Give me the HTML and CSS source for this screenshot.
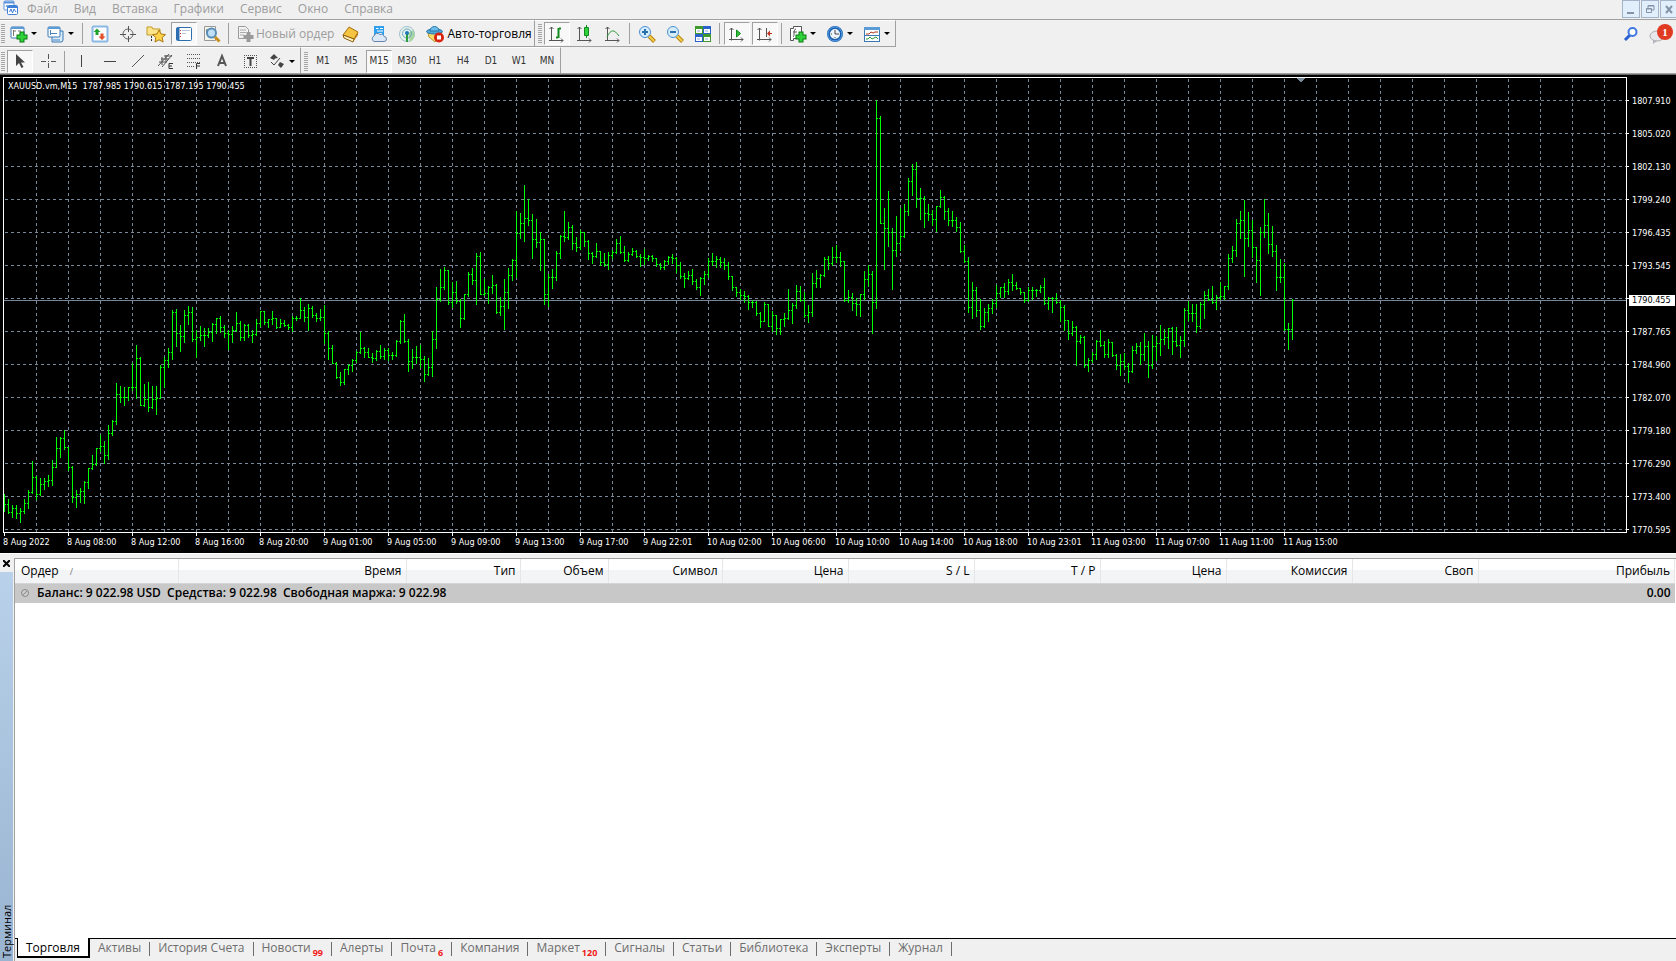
FILE: index.html
```html
<!DOCTYPE html>
<html lang="ru">
<head>
<meta charset="utf-8">
<title>XAUUSD.vm,M15</title>
<link rel="stylesheet" href="styles.css">
</head>
<body>
<header class="menubar">
  <svg class="app-icon" width="16" height="16" viewBox="0 0 16 16"><rect x="1" y="1" width="10" height="9" rx="1" fill="#fff" stroke="#5b93dd"/><path d="M1 2.500h10" stroke="#5b93dd" stroke-width="2"/><path d="M3 7l1-2 1 3 1-2" stroke="#5b93dd" fill="none"/><rect x="4.500" y="5.500" width="10" height="9" rx="1" fill="#fff" stroke="#3f7fd8"/><path d="M5 7h9" stroke="#3f7fd8" stroke-width="2"/><path d="M6.500 12l1.500-3 1.500 4 1.500-4 2 3" stroke="#3f7fd8" fill="none"/></svg>
  <nav class="menus">
    <button>Файл</button><button>Вид</button><button>Вставка</button><button>Графики</button><button>Сервис</button><button>Окно</button><button>Справка</button>
  </nav>
  <div class="win-buttons">
    <button aria-label="Свернуть"><svg width="16" height="16" viewBox="0 0 16 16"><path d="M4 12h7" stroke="#8494a8" stroke-width="2"/></svg></button>
    <button aria-label="Восстановить"><svg width="16" height="16" viewBox="0 0 16 16"><path d="M6 7V4.500h6V9h-2M6 5h6" stroke="#8494a8" fill="none"/><path d="M4.500 7.500h5v4h-5zM4 8h6" stroke="#8494a8" fill="none"/></svg></button>
    <button aria-label="Закрыть"><svg width="16" height="16" viewBox="0 0 16 16"><path d="M5 5l6 7M11 5l-6 7" stroke="#8494a8" stroke-width="2"/></svg></button>
  </div>
</header>

<div class="toolrow">
  <div class="toolbar">
    <span class="grip"></span>
    <button class="drop" aria-label="Новый график"><svg width="18" height="18" viewBox="0 0 18 18"><rect x="1" y="2" width="13" height="11" rx="1" fill="#fff" stroke="#3b78b4"/><path d="M1 3h13" stroke="#5b9bd5" stroke-width="2"/><path d="M3.500 5v6M3 6h3M8 6h3" stroke="#777"/><path d="M12 6.500v11M6.500 12h11" stroke="#087a10" stroke-width="5"/><path d="M12 7.500v9M7.500 12h9" stroke="#2fd23a" stroke-width="3"/></svg><i class="arrow"></i></button>
    <button class="drop" aria-label="Профили"><svg width="18" height="18" viewBox="0 0 18 18"><path d="M5 6h11v9a2 2 0 0 1-2 2H5z" fill="#d9ebfa" stroke="#3b78b4"/><rect x="1" y="2" width="12" height="10" rx="1" fill="#fff" stroke="#3b78b4"/><path d="M1 3h12" stroke="#5b9bd5" stroke-width="2"/><path d="M3.500 5v5M3 8.500h7M6 15h7" stroke="#4a86bd"/></svg><i class="arrow"></i></button>
    <span class="sep"></span>
    <button aria-label="Обзор рынка"><svg width="18" height="18" viewBox="0 0 18 18"><rect x="1.500" y="1.500" width="15" height="15" rx="1" fill="#fff" stroke="#8ab9e6" stroke-width="2"/><path d="M6 3.500l3.500 3.500H7.500v3h-3V7h-2z" fill="#20a12c"/><path d="M11 15l-3.500-3.500h2v-3h3v3h2z" fill="#e0502a"/></svg></button>
    <button aria-label="Перекрестие"><svg width="18" height="18" viewBox="0 0 18 18"><circle cx="9" cy="9" r="5" fill="none" stroke="#666"/><path d="M9.500 1v6M9.500 11v6M1 9.500h6M11 9.500h6" stroke="#555"/></svg></button>
    <button aria-label="Навигатор"><svg width="20" height="18" viewBox="0 0 20 18"><path d="M1 2h5l1 2h7v6H1z" fill="#fbe489" stroke="#c39a26"/><path d="M5.500 11v6" stroke="#333" stroke-dasharray="2 1"/><path d="M13 5l2 4 4.500.6-3.300 3 .9 4.400-4.100-2.200-4 2.200.8-4.400-3.200-3 4.400-.6z" fill="#ffd24a" stroke="#a97a12"/></svg></button>
    <button class="on" aria-label="Список"><svg width="18" height="18" viewBox="0 0 18 18"><rect x="1.500" y="2.500" width="15" height="13" rx="1" fill="#fff" stroke="#2d6eb0"/><path d="M3 3v12" stroke="#2d6eb0" stroke-width="3"/><path d="M7 5.500h8M7 8.500h4" stroke="#b5c7da"/><path d="M5.500 5v1M5.500 8v1M5.500 11v1" stroke="#c33"/></svg></button>
    <button aria-label="Тестер"><svg width="18" height="18" viewBox="0 0 18 18"><path d="M1.500 1.500h11v14h-11z" fill="#f4f4ea" stroke="#999"/><path d="M4 4v5M3 6h2M8 3v4" stroke="#555"/><circle cx="8.500" cy="8" r="4.500" fill="#bfe0f7" stroke="#5b8fb8" stroke-width="2"/><path d="M12 12l4.500 4.500" stroke="#c98f1e" stroke-width="3"/></svg></button>
    <span class="sep"></span>
    <button class="wide muted"><svg width="17" height="18" viewBox="0 0 17 18"><path d="M1.500 1.500h7l3 3v9h-10z" fill="#f2f2f2" stroke="#9a9a9a"/><path d="M3 5h6M3 7.500h6M3 10h4" stroke="#aaa"/><path d="M11.500 7v10M6.500 12h10" stroke="#999" stroke-width="4"/></svg>Новый ордер</button>
    <button aria-label="MetaEditor"><svg width="18" height="18" viewBox="0 0 18 18"><path d="M1 10l6-8 9 5-4 7z" fill="#f5c542" stroke="#a4700f"/><path d="M1 10l1 3 9 4 1-3z" fill="#fff3c0" stroke="#8a5c0b"/><path d="M12 14l4-7v3l-5 7z" fill="#b87c12"/></svg></button>
    <button aria-label="Облако"><svg width="18" height="18" viewBox="0 0 18 18"><path d="M4 1h10v9H4z" fill="#2fa0ef"/><path d="M6 3.500h2.500M10 3.500h3M7 6h6M6 8.500h6" stroke="#fff"/><path d="M4 16.500a3 3 0 0 1 0-5.500 3.500 3.500 0 0 1 6-1.500 3 3 0 0 1 4 2 2.500 2.500 0 0 1 0 5z" fill="#dde8f6" stroke="#6484ae"/></svg></button>
    <button aria-label="Сигналы"><svg width="18" height="18" viewBox="0 0 18 18"><circle cx="9" cy="9" r="7.500" fill="#e6f2ee" stroke="#9fc0cc"/><path d="M10 8l2 9a8 8 0 0 0 3-12z" fill="#a5d6a0"/><circle cx="9" cy="8.500" r="4.500" fill="none" stroke="#6aa3c0"/><path d="M9 9v8" stroke="#2d9d3c" stroke-width="2"/><circle cx="9" cy="8" r="2" fill="#1f78b5"/></svg></button>
    <button class="wide"><svg width="19" height="18" viewBox="0 0 19 18"><path d="M2 8l1 4 6 5 5-4 2-6z" fill="#f7dc6a" stroke="#b8942a"/><ellipse cx="8.500" cy="6.500" rx="8" ry="2.500" fill="#4fa6d8" stroke="#2a78a8"/><path d="M4 6c0-6 9-6 9 0z" fill="#6cbcec" stroke="#2a78a8"/><circle cx="13" cy="12.500" r="5" fill="#d9230f"/><path d="M11 10.500h4v4h-4z" fill="#fff"/></svg>Авто-торговля</button>
  </div>
  <div class="toolbar">
    <span class="grip"></span>
    <button class="on" aria-label="Бары"><svg width="18" height="18" viewBox="0 0 18 18"><path d="M3.500 2v13.500M1 15.500h14M1.500 4l2-2 2 2M13 13.500l2 2-2 2" stroke="#555" fill="none"/><path d="M10.500 3v10M8 12.500h2M11 3.500h2" stroke="#138a1d" stroke-width="2"/></svg></button>
    <button aria-label="Свечи"><svg width="18" height="18" viewBox="0 0 18 18"><path d="M3.500 2v13.500M1 15.500h14M1.500 4l2-2 2 2M13 13.500l2 2-2 2" stroke="#555" fill="none"/><path d="M10.500 0v13" stroke="#138a1d"/><path d="M8.500 2.500h4v8h-4z" fill="#2fd03a" stroke="#138a1d"/></svg></button>
    <button aria-label="Линия"><svg width="18" height="18" viewBox="0 0 18 18"><path d="M3.500 2v13.500M1 15.500h14M1.500 4l2-2 2 2M13 13.500l2 2-2 2" stroke="#555" fill="none"/><path d="M3 12c4-8 7-8 12-1" stroke="#2f9a37" fill="none"/></svg></button>
    <span class="sep"></span>
    <button aria-label="Увеличить"><svg width="18" height="18" viewBox="0 0 18 18"><path d="M11 11l5.500 5.500" stroke="#b98410" stroke-width="4"/><path d="M11 11l5 5" stroke="#f4cf51" stroke-width="2"/><circle cx="7" cy="7" r="5.500" fill="#d5ecfc" stroke="#4a90cf"/><path d="M4 7h6M7 4v6" stroke="#2a6fae" stroke-width="2"/></svg></button>
    <button aria-label="Уменьшить"><svg width="18" height="18" viewBox="0 0 18 18"><path d="M11 11l5.500 5.500" stroke="#b98410" stroke-width="4"/><path d="M11 11l5 5" stroke="#f4cf51" stroke-width="2"/><circle cx="7" cy="7" r="5.500" fill="#d5ecfc" stroke="#4a90cf"/><path d="M4 7h6" stroke="#2a6fae" stroke-width="2"/></svg></button>
    <button aria-label="Плитка"><svg width="18" height="18" viewBox="0 0 18 18"><path d="M1 1h8v8H1zM9 9h8v8H9z" fill="#3f9a2c"/><path d="M9 1h8v8H9zM1 9h8v8H1z" fill="#2a62c9"/><path d="M2 4h6v4H2zM10 4h6v4h-6zM2 12h6v4H2zM10 12h6v4h-6z" fill="#fff"/><path d="M3 6h3M11 6h3M3 14h3M11 14h3" stroke="#8fb0dd"/></svg></button>
    <span class="sep"></span>
    <button class="on" aria-label="Автопрокрутка"><svg width="18" height="18" viewBox="0 0 18 18"><path d="M3.500 3v12.500M1 14.500h14M1.500 5l2-2 2 2M13 12.500l2 2-2 2" stroke="#555" fill="none"/><path d="M8.500 5v7l4-3.500z" fill="#2fc03a" stroke="#138a1d"/></svg></button>
    <button class="on" aria-label="Сдвиг графика"><svg width="18" height="18" viewBox="0 0 18 18"><path d="M3.500 3v12.500M1 14.500h14M1.500 5l2-2 2 2M13 12.500l2 2-2 2M10.500 3v9" stroke="#555" fill="none"/><path d="M16 8.500h-3" stroke="#c0341d"/><path d="M11 8.500l3-3v6z" fill="#c0341d"/></svg></button>
    <span class="sep"></span>
    <button class="drop" aria-label="Индикаторы"><svg width="18" height="18" viewBox="0 0 18 18"><path d="M1.500 3.500h3v-2h8v12h-8v2h-3z" fill="#fff" stroke="#555"/><path d="M7 4c-3 0-1 7-3 8M4 7h4" stroke="#555" fill="none"/><path d="M12 6.500v11M6.500 12h11" stroke="#087a10" stroke-width="5"/><path d="M12 7.500v9M7.500 12h9" stroke="#2fd23a" stroke-width="3"/></svg><i class="arrow"></i></button>
    <button class="drop" aria-label="Периоды"><svg width="18" height="18" viewBox="0 0 18 18"><circle cx="9" cy="9" r="6.500" fill="#eef6fd" stroke="#1b5fae" stroke-width="3"/><circle cx="9" cy="9" r="7" fill="none" stroke="#5aa4ea"/><path d="M9 5v4h4M5 9h1M9 13v-1" stroke="#444" fill="none"/></svg><i class="arrow"></i></button>
    <button class="drop" aria-label="Шаблоны"><svg width="18" height="18" viewBox="0 0 18 18"><rect x="1.500" y="2.500" width="15" height="14" fill="#fff" stroke="#3b78b4"/><path d="M1 3.500h16" stroke="#5b9bd5" stroke-width="3"/><path d="M3 9h3l2-2 2 1 2-1h3" stroke="#b03a22" fill="none"/><path d="M2 10.500h14" stroke="#3b78b4"/><path d="M3 14h2l2-2 2 2 2-1 2-1 2 2" stroke="#2f9a37" fill="none"/></svg><i class="arrow"></i></button>
  </div>
  <div class="notices">
    <button aria-label="Поиск"><svg width="16" height="16" viewBox="0 0 16 16"><path d="M7 9l-5 5" stroke="#2b5fd0" stroke-width="3"/><circle cx="9.500" cy="6" r="4" fill="#fff" stroke="#3f78e0" stroke-width="2"/></svg></button>
    <button aria-label="Сообщения" class="chat"><svg width="16" height="14" viewBox="0 0 16 14"><ellipse cx="8" cy="6" rx="7" ry="5" fill="#e8e8ec" stroke="#a9a9b0"/><path d="M4 10v4l4-3" fill="#b5b5bc"/></svg><span class="badge">1</span></button>
  </div>
</div>

<div class="toolrow drawing">
  <div class="toolbar">
    <span class="grip"></span>
    <button class="on" aria-label="Курсор"><svg width="18" height="18" viewBox="0 0 18 18"><path d="M5 2v12l3-3 2.500 5 2-1L10 10.500h4z" fill="#444"/></svg></button>
    <button aria-label="Перекрестие"><svg width="18" height="18" viewBox="0 0 18 18"><path d="M9.500 2v5M9.500 11v5M2 9.500h5M12 9.500h5M9 9.500h1" stroke="#555"/></svg></button>
    <span class="sep"></span>
    <button aria-label="Вертикальная линия"><svg width="18" height="18" viewBox="0 0 18 18"><path d="M8.500 3v12" stroke="#444"/></svg></button>
    <button aria-label="Горизонтальная линия"><svg width="18" height="18" viewBox="0 0 18 18"><path d="M3 9.500h12" stroke="#444"/></svg></button>
    <button aria-label="Трендовая линия"><svg width="18" height="18" viewBox="0 0 18 18"><path d="M3 15L15 3" stroke="#555"/></svg></button>
    <button aria-label="Канал"><svg width="18" height="18" viewBox="0 0 18 18"><path d="M1 14L12 2M5 15L15 3M2 10h7M4 7h8M7 4h8M5 5v8M9 3v8" stroke="#555"/><path d="M16 11.500h-4v5h4M12 14h3" stroke="#333" fill="none"/></svg></button>
    <button aria-label="Фибоначчи"><svg width="18" height="18" viewBox="0 0 18 18"><path d="M2 2.500h13M2 6.500h13M2 10.500h13M2 14.500h7" stroke="#555" stroke-dasharray="1 1"/><path d="M15 11.500h-3.500V17M12 14h3" stroke="#333" fill="none"/></svg></button>
    <button aria-label="Текст"><svg width="18" height="18" viewBox="0 0 18 18"><path d="M5 14L9 4l4 10M6 11h6" stroke="#555" stroke-width="2" fill="none"/></svg></button>
    <button aria-label="Метка"><svg width="18" height="18" viewBox="0 0 18 18"><path d="M3 3.500h13M3 15.500h13M3.500 3v13M15.500 3v13" stroke="#555" fill="none" stroke-dasharray="1 1"/><path d="M6 6h7M9.500 6v8" stroke="#444" stroke-width="2"/></svg></button>
    <button class="drop" aria-label="Стрелки"><svg width="18" height="18" viewBox="0 0 18 18"><path d="M6 2l4 4-3 .5L6 8 2 6zM12 10l4 2-3 4-3-3z" fill="#444"/><path d="M3 10l3 3 6-7" stroke="#444" fill="none"/></svg><i class="arrow"></i></button>
  </div>
  <div class="toolbar periods">
    <span class="grip"></span>
    <button>M1</button><button>M5</button><button class="on">M15</button><button>M30</button><button>H1</button><button>H4</button><button>D1</button><button>W1</button><button>MN</button>
  </div>
</div>

<main class="chart">
  <div class="plot">
    <svg class="plot-svg" aria-label="XAUUSD M15">
      <g id="grid" class="grid"></g>
      <path id="bars" class="bars"/>
      <path d="M1292 0h9l-4 4h-1z" fill="#778899"/>
    </svg>
    <div class="plot-title">XAUUSD.vm,M15&nbsp; 1787.985 1790.615 1787.195 1790.455</div>
  </div>
  <ol class="prices">
    <li>1807.910</li><li>1805.020</li><li>1802.130</li><li>1799.240</li><li>1796.435</li><li>1793.545</li><li class="last"><span>1790.455</span></li><li>1787.765</li><li>1784.960</li><li>1782.070</li><li>1779.180</li><li>1776.290</li><li>1773.400</li><li>1770.595</li>
  </ol>
  <ol class="times">
    <li>8 Aug 2022</li><li>8 Aug 08:00</li><li>8 Aug 12:00</li><li>8 Aug 16:00</li><li>8 Aug 20:00</li><li>9 Aug 01:00</li><li>9 Aug 05:00</li><li>9 Aug 09:00</li><li>9 Aug 13:00</li><li>9 Aug 17:00</li><li>9 Aug 22:01</li><li>10 Aug 02:00</li><li>10 Aug 06:00</li><li>10 Aug 10:00</li><li>10 Aug 14:00</li><li>10 Aug 18:00</li><li>10 Aug 23:01</li><li>11 Aug 03:00</li><li>11 Aug 07:00</li><li>11 Aug 11:00</li><li>11 Aug 15:00</li>
  </ol>
</main>

<section class="terminal">
  <aside class="side">
    <button class="close" aria-label="Закрыть"><svg width="7" height="7" viewBox="0 0 7 7"><path d="M0 0l7 7M7 0L0 7" stroke="#000" stroke-width="2"/></svg></button>
    <div class="side-title">Терминал</div>
  </aside>
  <div class="panel">
    <div class="sheet">
      <table class="orders">
        <colgroup><col class="c-order"><col class="c-time"><col class="c-type"><col class="c-vol"><col class="c-sym"><col class="c-num"><col class="c-num"><col class="c-num"><col class="c-num"><col class="c-num"><col class="c-num"><col></colgroup>
        <thead><tr><th>Ордер <span class="sort">/</span></th><th>Время</th><th>Тип</th><th>Объем</th><th>Символ</th><th>Цена</th><th>S / L</th><th>T / P</th><th>Цена</th><th>Комиссия</th><th>Своп</th><th>Прибыль</th></tr></thead>
        <tbody><tr><td colspan="11"><svg width="8" height="8" viewBox="0 0 8 8"><circle cx="4" cy="4" r="3.500" fill="#ccc" stroke="#888"/><path d="M2 6l4-4" stroke="#888"/></svg>Баланс: 9 022.98 USD&nbsp; Средства: 9 022.98&nbsp; Свободная маржа: 9 022.98</td><td>0.00</td></tr></tbody>
      </table>
    </div>
    <nav class="tabs">
      <button class="active">Торговля</button><button>Активы</button><button>История Счета</button><button>Новости<sub>99</sub></button><button>Алерты</button><button>Почта<sub>6</sub></button><button>Компания</button><button>Маркет<sub>120</sub></button><button>Сигналы</button><button>Статьи</button><button>Библиотека</button><button>Эксперты</button><button>Журнал</button>
    </nav>
  </div>
</section>
<script src="chart.js"></script>
</body>
</html>
```
FILE: styles.css
```css
* { box-sizing: border-box; }
body {
  margin: 0;
  min-height: 100vh;
  display: flex;
  flex-direction: column;
  background: #f0f0f0;
  font: 12px/16px "Open Sans", "Noto Sans", sans-serif;
  color: #000;
}
button { font: inherit; color: inherit; background: none; border: 0; padding: 0; margin: 0; }
svg { display: block; flex: none; }
ol { list-style: none; margin: 0; padding: 0; }

/* menu */
.menubar { display: flex; align-items: flex-start; height: 20px; border-bottom: 1px solid #a0a0a0; }
.app-icon { margin-left: 3px; }
.menus { display: flex; padding-top: 1px; color: #9d9d9d; }
.menus button { padding: 0 8px; }
.win-buttons { margin-left: auto; display: flex; gap: 1px; }
.win-buttons button { width: 18px; height: 18px; border: 1px solid #a3b4c8; background: #e1eefb; overflow: hidden; }
.win-buttons button:last-child { width: 16px; border-right: 0; }

/* toolbars */
.toolrow { display: flex; height: 27px; }
.toolbar {
  display: flex;
  align-items: center;
  gap: 2px;
  padding: 0 0 0 1px;
  border-top: 1px solid #fff;
  border-right: 1px solid #a0a0a0;
  border-bottom: 1px solid #a0a0a0;
}
.toolbar + .toolbar { padding-left: 3px; }
.drawing { height: 26px; }
.drawing .toolbar { padding-top: 1px; border-bottom: 0; }
.grip { width: 4px; height: 19px; background: repeating-linear-gradient(#a6a6a6 0 1px, #f0f0f0 1px 2px); }
.toolbar button { width: 26px; height: 23px; display: flex; align-items: center; justify-content: center; }
.toolbar .on { border: 1px solid #fff; border-top-color: #a0a0a0; border-left-color: #a0a0a0; background: #f8f8f8; }
.toolbar .drop { width: 35px; gap: 3px; padding-left: 3px; justify-content: flex-start; }
.arrow { width: 0; border: 3px solid transparent; border-top-color: #000; border-bottom-width: 0; }
.toolbar .wide { width: auto; gap: 2px; padding: 0 2px 0 4px; }
.muted { color: #9d9d9d; }
.sep { width: 2px; height: 21px; margin: 0 1px; border-left: 1px solid #a0a0a0; }
.periods { font: 10px/14px "DejaVu Sans Condensed", "DejaVu Sans", sans-serif; color: #333; }
.notices { margin-left: auto; display: flex; align-items: center; gap: 10px; padding-right: 3px; }
.chat { position: relative; width: 24px; height: 20px; }
.chat svg { margin-top: 6px; }
.badge {
  position: absolute; right: 0; top: 0;
  width: 16px; height: 16px; border-radius: 8px;
  background: #e03a22; color: #fff;
  font: bold 11px/16px "Liberation Serif", serif;
}

/* chart */
.chart {
  display: grid;
  grid-template-columns: minmax(0, 1fr) 49px;
  grid-template-rows: auto 20px;
  margin-top: 1px;
  padding: 2px 0 0 3px;
  background: #000;
  color: #fff;
  border-top: 1px solid #696969;
  border-bottom: 1px solid #fff;
  box-shadow: 0 -1px #a0a0a0;
  font: 9px/12px "DejaVu Sans Condensed", "DejaVu Sans", sans-serif;
}
.plot { position: relative; border: 1px solid #fff; overflow: hidden; }
.plot-svg { position: absolute; inset: 0; width: 100%; height: 100%; shape-rendering: crispEdges; }
.grid path { stroke: #778899; stroke-dasharray: 3 3; }
.grid .level { stroke-dasharray: none; }
.bars { stroke: #00ff00; fill: none; }
.plot-title { position: absolute; left: 4px; top: 2px; }
.prices { padding-top: 7px; height: 456px; }
.prices li { height: 33px; line-height: 34px; display: flex; align-items: center; }
.prices li::before { content: ""; width: 2px; height: 1px; background: #fff; margin-right: 3px; }
.prices .last::before { margin-right: 0; }
.last span { background: #fff; color: #000; padding: 0 4px 0 3px; line-height: 11px; margin-top: 4px; }
.times { grid-column: 1 / -1; display: flex; }
.times li { width: 64px; flex: none; white-space: nowrap; }
.times li::before { content: ""; display: block; width: 1px; height: 3px; margin-left: 1px; background: #fff; }

/* terminal */
.terminal { flex: 1; display: flex; padding-top: 4px; }
.side { width: 14px; display: flex; flex-direction: column; }
.close { height: 14px; padding: 2px 0 0 3px; display: flex; align-items: flex-start; }
.side-title {
  flex: 1;
  writing-mode: vertical-rl;
  transform: rotate(180deg);
  width: 13px;
  line-height: 13px;
  padding-top: 3px;
  font-size: 11px;
  background: linear-gradient(#99b4d1, #b9d1ea);
}
.panel { flex: 1; min-width: 0; display: flex; flex-direction: column; border-left: 1px solid #a0a0a0; border-top: 1px solid #a0a0a0; }
.sheet { flex: 1; background: #fff; border-bottom: 1px solid #000; padding-right: 1px; }
.orders { width: 100%; table-layout: fixed; border-collapse: collapse; }
.c-order { width: 163px; }
.c-time { width: 228px; }
.c-type { width: 114px; }
.c-vol { width: 88px; }
.c-sym { width: 114px; }
.c-num { width: 126px; }
.orders th {
  height: 24px;
  padding: 1px 4px 0 0;
  font-weight: normal;
  text-align: right;
  border-right: 1px solid #e4e6e8;
  border-bottom: 1px solid #d5d5d5;
  background: linear-gradient(#fff 45%, #f3f4f6 45%);
}
.orders th:first-child { text-align: left; padding-left: 6px; }
.sort { font-size: 9px; color: #777; margin-left: 8px; }
.orders td { height: 20px; padding: 0 4px 0 0; background: #c8c8c8; font-weight: 600; text-align: right; }
.orders td:first-child { text-align: left; padding-left: 6px; }
.orders td svg { display: inline-block; margin-right: 8px; }
.tabs { display: flex; height: 22px; color: #6d6d6d; padding-left: 2px; }
.tabs button { position: relative; display: flex; align-items: flex-start; padding: 1px 9px 0 8px; }
.tabs button:not(.active)::after { content: ""; position: absolute; right: 0; top: 3px; width: 1px; height: 14px; background: #6d6d6d; }
.tabs .active { height: 20px; margin-top: -1px; padding: 2px 8px 0; background: #fff; color: #000; border: 1px solid #000; border-top: 0; border-right-width: 2px; border-bottom-width: 2px; }
.tabs sub { font: bold 9px/12px "Open Sans", sans-serif; color: #f01818; margin: 7px 0 0 2px; }
```
FILE: chart.js
```js
// One entry per 15-minute bar: high, low, close as rows of the chart window.
const BARS = `494,511,504 499,513,512 505,517,508 505,518,513 508,522,511 499,513,503 490,508,492 461,493,477 476,499,494 478,495,484
478,489,481 475,486,480 460,485,467 437,467,448 437,457,438 430,449,447 447,470,467 466,502,497 490,507,494 488,502,491
481,503,482 468,488,468 455,469,464 448,465,448 435,451,446 441,463,455 425,459,433 420,435,421 383,424,394 386,402,397
387,405,397 387,400,387 363,390,387 345,398,358 357,405,405 384,406,399 382,411,407 386,408,399 386,414,398 365,398,367
357,387,360 348,367,352 310,359,312 309,346,333 325,351,336 310,342,315 306,324,312 307,341,339 330,357,337 326,340,335
328,346,335 328,337,332 323,341,324 318,333,318 316,332,327 325,337,333 330,349,334 326,342,330 312,331,323 321,340,337
324,340,325 324,337,335 330,342,334 319,335,323 311,326,311 311,324,322 319,327,319 311,324,318 318,328,327 319,327,323
320,326,325 324,329,327 316,331,318 316,320,318 298,318,310 307,321,317 304,330,308 306,317,315 313,321,318 309,320,317
305,343,333 331,359,348 345,363,363 362,378,377 372,385,382 369,384,369 364,374,365 359,371,360 351,362,352 332,353,348
347,357,352 348,357,357 353,362,358 350,360,351 345,358,356 348,359,350 348,360,355 352,359,355 340,356,341 320,343,321
314,342,341 339,371,361 349,368,357 346,363,357 345,367,359 356,381,374 358,375,367 331,376,339 287,348,299 269,301,287
267,289,270 270,304,302 282,307,292 281,303,301 299,327,318 294,319,294 272,296,274 268,284,280 253,304,256 252,294,294
279,295,293 286,303,287 275,293,285 284,313,312 297,315,306 279,329,292 268,308,275 259,280,260 211,277,233 213,238,223
185,241,218 199,225,220 214,258,239 219,247,242 232,270,239 239,304,294 274,306,277 269,288,277 251,280,253 235,258,236
211,241,237 222,239,227 225,249,243 237,251,247 230,249,232 232,246,241 240,259,253 252,263,256 243,257,251 251,265,262
253,266,264 252,269,255 250,258,252 239,253,243 236,253,252 246,261,260 252,261,254 248,255,251 250,257,256 254,266,257
249,264,258 255,260,256 255,261,258 258,266,264 263,269,267 260,269,261 256,264,257 254,263,258 257,272,265 262,278,276
273,287,278 271,279,275 269,284,281 279,289,287 277,295,278 271,284,274 258,277,261 253,265,261 256,267,259 257,267,262
258,269,265 262,279,276 276,290,287 287,296,292 289,299,295 291,302,296 295,309,302 300,307,302 301,315,313 312,327,321
302,321,304 304,326,326 311,331,315 315,334,328 319,334,319 313,326,318 289,319,310 303,323,305 285,308,291 286,301,300
292,317,315 305,322,312 273,316,283 270,287,278 274,287,275 257,276,259 256,269,263 247,265,257 245,262,257 252,266,261
261,301,300 290,302,297 293,310,303 298,315,304 294,316,294 271,299,279 265,286,274 271,333,302 100,308,118 116,223,223
208,269,228 191,246,232 228,289,250 216,256,243 208,250,236 204,237,211 178,215,181 164,195,169 162,207,198 188,219,198
196,227,213 204,220,214 210,225,219 206,231,206 190,207,197 196,219,211 208,225,220 211,226,220 217,231,227 222,252,251
245,262,261 257,312,307 282,318,290 287,316,310 299,329,326 308,327,312 304,321,308 299,313,303 285,307,293 287,297,287
283,297,291 279,294,282 274,290,285 282,289,288 288,294,292 292,302,300 287,301,290 287,299,290 289,296,290 285,292,287
278,304,303 297,309,298 297,312,298 293,303,302 300,321,307 305,330,320 320,339,333 321,335,327 326,365,341 335,343,337
336,367,365 358,371,360 352,362,354 340,359,341 330,346,345 341,357,354 339,357,342 342,356,355 354,369,365 354,375,361
353,369,366 363,382,371 346,372,350 343,353,346 342,364,354 333,360,346 341,377,365 335,368,346 336,360,343 325,355,339
329,344,337 328,348,328 327,354,341 327,346,345 336,357,340 308,346,310 301,320,313 304,321,313 304,332,326 302,328,304
291,318,295 289,300,299 286,303,302 295,309,297 282,299,296 286,299,286 254,289,258 246,262,250 219,256,223 211,238,220
200,276,238 212,246,230 220,257,247 247,282,260 227,295,232 199,237,225 213,253,244 226,256,251 245,290,277 259,282,277
263,330,329 323,349,329 299,339,300`.trim().split(/\s+/).map(b => b.split(",").map(Number));

const TOP = 78;
const STEP = 4;
const SPAN = 6000;

let d = "";
let open = BARS[0][2];
BARS.forEach(([high, low, close], i) => {
  const x = i * STEP + 0.5;
  d += `M${x} ${high - TOP}V${low - TOP + 1}`;
  if (i) d += `M${x - 1.5} ${open - TOP + 0.5}h1`;
  d += `M${x + 0.5} ${close - TOP + 0.5}h1`;
  open = close;
});
document.getElementById("bars").setAttribute("d", d);

let grid = "";
for (let x = 32; x < SPAN; x += 32) grid += `M${x + 0.5} 1V455`;
for (let k = 0; k < 14; k++) grid += `M1 ${22.5 + 33 * k}H${SPAN}`;
document.getElementById("grid").innerHTML =
  `<path d="${grid}"/><path class="level" d="M0 ${300 - TOP + 0.5}H${SPAN}"/>`;
```
